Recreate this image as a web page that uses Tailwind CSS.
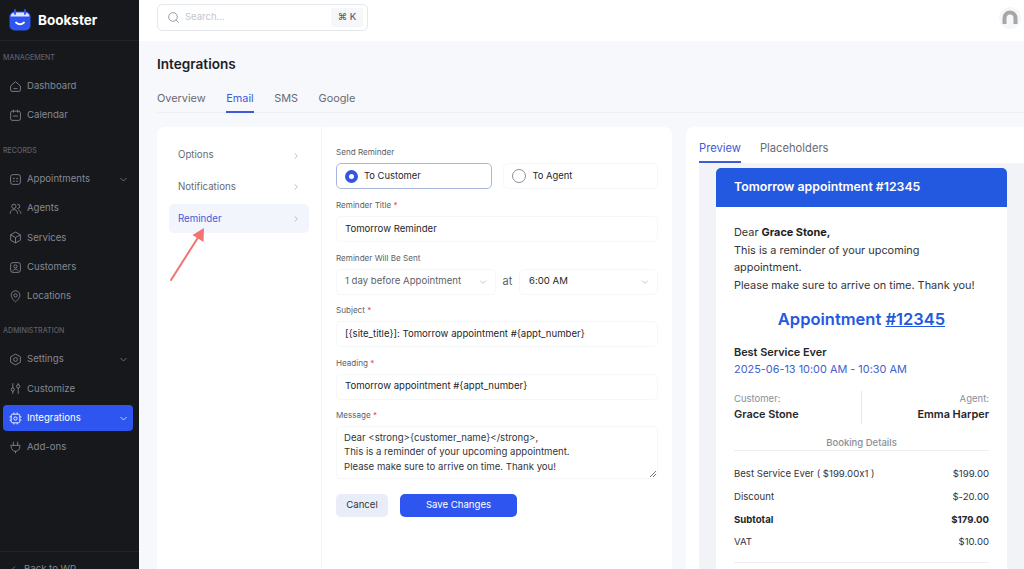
<!DOCTYPE html>
<html lang="en">
<head>
    <meta charset="UTF-8">
    <title>Bookster</title>
    <script src="https://cdn.jsdelivr.net/npm/@tailwindcss/browser@4"></script>
</head>
<body class="w-[1024px] h-[569px] overflow-hidden flex bg-[#f6f8fc] font-['Inter','Liberation_Sans',sans-serif] [font-feature-settings:'calt'_0] text-[#1c1e24]">

    <!-- Sidebar -->
    <aside class="w-[139px] h-[569px] shrink-0 bg-[#17181c] flex flex-col text-[#858892] text-[9.600px]">
        <div class="h-[41px] shrink-0 flex items-center gap-[7px] pl-[9px] border-b border-[#22242a]">
            <svg width="22" height="22" viewBox="0 0 22 22">
                <rect x="0.5" y="2.5" width="21" height="19" rx="5" fill="#2f55f0"/>
                <path d="M1.5 7.5Q2 4 6 3.5H16Q20 4 20.5 7.5Z" fill="#dfe6ff"/>
                <path d="M6 1v4M16 1v4" stroke="#2f55f0" stroke-width="1.8" stroke-linecap="round"/>
                <path d="M7 13.5q4 3.6 8 0" fill="none" stroke="#fff" stroke-width="1.8" stroke-linecap="round"/>
            </svg>
            <span class="text-white text-[13.5px] font-bold">Bookster</span>
        </div>

        <p class="mt-[13px] pl-[3px] text-[7.100px] leading-[8px] font-medium text-[#5c5f68]">MANAGEMENT</p>
        <nav class="mt-[11px] flex flex-col gap-[3.3px]">
            <a class="h-[26px] ml-[3px] mr-[6px] pl-[6px] flex items-center gap-[5px]">
                <svg class="w-[13px] h-[13px]" viewBox="0 0 24 24" fill="none" stroke="currentColor" stroke-width="1.6"><path d="M3 11l9-8 9 8v8a2 2 0 0 1-2 2H5a2 2 0 0 1-2-2z"/><path d="M9 16h6" stroke-linecap="round"/></svg>
                Dashboard
            </a>
            <a class="h-[26px] ml-[3px] mr-[6px] pl-[6px] flex items-center gap-[5px]">
                <svg class="w-[13px] h-[13px]" viewBox="0 0 24 24" fill="none" stroke="currentColor" stroke-width="1.6"><rect x="3" y="4" width="18" height="17" rx="3"/><path d="M8 2v4M16 2v4M8 13h8" stroke-linecap="round"/></svg>
                Calendar
            </a>
        </nav>

        <p class="mt-[19px] pl-[3px] text-[7.100px] leading-[8px] font-medium text-[#5c5f68]">RECORDS</p>
        <nav class="mt-[11px] flex flex-col gap-[3.3px]">
            <a class="h-[26px] ml-[3px] mr-[6px] pl-[6px] pr-[5px] flex items-center gap-[5px]">
                <svg class="w-[13px] h-[13px]" viewBox="0 0 24 24" fill="none" stroke="currentColor" stroke-width="1.6"><rect x="3" y="3" width="18" height="18" rx="4"/><path d="M8 10h2M14 10h2M8 15h2M14 15h2" stroke-linecap="round"/></svg>
                Appointments
                <svg class="ml-auto w-[9px] h-[9px]" viewBox="0 0 24 24" fill="none" stroke="currentColor" stroke-width="2"><path d="M4 8l8 8 8-8"/></svg>
            </a>
            <a class="h-[26px] ml-[3px] mr-[6px] pl-[6px] flex items-center gap-[5px]">
                <svg class="w-[13px] h-[13px]" viewBox="0 0 24 24" fill="none" stroke="currentColor" stroke-width="1.6"><circle cx="9" cy="8" r="4"/><path d="M2 21c0-4 3-7 7-7s7 3 7 7M16 4a4 4 0 0 1 0 8M18 15c2 1 4 3 4 6" stroke-linecap="round"/></svg>
                Agents
            </a>
            <a class="h-[26px] ml-[3px] mr-[6px] pl-[6px] flex items-center gap-[5px]">
                <svg class="w-[13px] h-[13px]" viewBox="0 0 24 24" fill="none" stroke="currentColor" stroke-width="1.6"><path d="M12 2l9 5v10l-9 5-9-5V7z"/><path d="M3 7l9 5 9-5M12 12v10"/></svg>
                Services
            </a>
            <a class="h-[26px] ml-[3px] mr-[6px] pl-[6px] flex items-center gap-[5px]">
                <svg class="w-[13px] h-[13px]" viewBox="0 0 24 24" fill="none" stroke="currentColor" stroke-width="1.6"><rect x="3" y="3" width="18" height="18" rx="4"/><circle cx="12" cy="10" r="3"/><path d="M7 19c1-3 3-4 5-4s4 1 5 4"/></svg>
                Customers
            </a>
            <a class="h-[26px] ml-[3px] mr-[6px] pl-[6px] flex items-center gap-[5px]">
                <svg class="w-[13px] h-[13px]" viewBox="0 0 24 24" fill="none" stroke="currentColor" stroke-width="1.6"><path d="M12 22s8-6.500 8-12.500A8 8 0 0 0 4 9.500C4 15.500 12 22 12 22z"/><circle cx="12" cy="10" r="3"/></svg>
                Locations
            </a>
        </nav>

        <p class="mt-[18px] pl-[3px] text-[7.100px] leading-[8px] font-medium text-[#5c5f68]">ADMINISTRATION</p>
        <nav class="mt-[11px] flex flex-col gap-[3.3px]">
            <a class="h-[26px] ml-[3px] mr-[6px] pl-[6px] pr-[5px] flex items-center gap-[5px]">
                <svg class="w-[13px] h-[13px]" viewBox="0 0 24 24" fill="none" stroke="currentColor" stroke-width="1.6"><path d="M12 2l9 5v10l-9 5-9-5V7z"/><circle cx="12" cy="12" r="3.500"/></svg>
                Settings
                <svg class="ml-auto w-[9px] h-[9px]" viewBox="0 0 24 24" fill="none" stroke="currentColor" stroke-width="2"><path d="M4 8l8 8 8-8"/></svg>
            </a>
            <a class="h-[26px] ml-[3px] mr-[6px] pl-[6px] flex items-center gap-[5px]">
                <svg class="w-[13px] h-[13px]" viewBox="0 0 24 24" fill="none" stroke="currentColor" stroke-width="1.6"><path d="M7 3v8M7 17v4M17 3v2M17 11v10" stroke-linecap="round"/><circle cx="7" cy="14" r="3"/><circle cx="17" cy="8" r="3"/></svg>
                Customize
            </a>
            <a class="h-[26px] ml-[3px] mr-[6px] pl-[6px] pr-[5px] flex items-center gap-[5px] rounded-[4px] bg-[#2f55f0] text-white">
                <svg class="w-[13px] h-[13px]" viewBox="0 0 24 24" fill="none" stroke="currentColor" stroke-width="1.6"><rect x="4" y="4" width="16" height="16" rx="3"/><circle cx="12" cy="12" r="3"/><path d="M9 1v3M15 1v3M9 20v3M15 20v3M1 9h3M1 15h3M20 9h3M20 15h3"/></svg>
                Integrations
                <svg class="ml-auto w-[9px] h-[9px]" viewBox="0 0 24 24" fill="none" stroke="currentColor" stroke-width="2"><path d="M4 8l8 8 8-8"/></svg>
            </a>
            <a class="h-[26px] ml-[3px] mr-[6px] pl-[6px] flex items-center gap-[5px]">
                <svg class="w-[13px] h-[13px]" viewBox="0 0 24 24" fill="none" stroke="currentColor" stroke-width="1.6"><path d="M8 2v6M16 2v6M4 8h16v3a8 8 0 0 1-16 0zM12 19v3" stroke-linecap="round"/></svg>
                Add-ons
            </a>
        </nav>

        <div class="mt-auto h-[18px] shrink-0 border-t border-[#22242a] pl-[9px] pt-[11px] flex items-start gap-[6px] leading-[12px]">
            <svg class="w-[9px] h-[9px] mt-[2px]" viewBox="0 0 24 24" fill="none" stroke="currentColor" stroke-width="2"><path d="M16 4l-8 8 8 8"/></svg>
            <span class="whitespace-nowrap">Back to WP</span>
        </div>
    </aside>

    <div class="flex-1 min-w-0 flex flex-col h-[569px]">
        <!-- Top bar -->
        <header class="h-[41px] shrink-0 bg-white flex items-center justify-between pl-[18px] pr-[3px]">
            <div class="w-[211px] h-[27px] mt-[-6px] rounded-[5px] border border-[#e4e7ec] flex items-center pl-[9px] pr-[4px] gap-[5px] text-[9.500px] text-[#c3c6cd]">
                <svg class="w-[13px] h-[13px] text-[#8b8e98]" viewBox="0 0 24 24" fill="none" stroke="currentColor" stroke-width="1.6"><circle cx="11" cy="11" r="8"/><path d="M17 17l4 4" stroke-linecap="round"/></svg>
                Search...
                <span class="ml-auto w-[32px] h-[19px] rounded-[3px] bg-[#f6f7f9] flex items-center justify-center text-[9.500px] font-medium text-[#5c5f68]">⌘ K</span>
            </div>
            <svg class="mt-[-6px]" width="22" height="22" viewBox="0 0 22 22" fill="none">
                <circle cx="11" cy="11" r="11" fill="#f6f7f8"/>
                <path d="M5.500 17v-6a5.500 5.500 0 0 1 11 0v6" stroke="#a4a6aa" stroke-width="4"/>
            </svg>
        </header>

        <main class="flex-1 min-h-0 pl-[18px] flex flex-col overflow-hidden">
            <h1 class="mt-[14px] text-[13.600px] leading-[18px] font-semibold text-[#1c1e24]">Integrations</h1>
            <div class="mt-[17px] h-[23px] shrink-0 flex gap-[20.500px] text-[10.900px] text-[#686b74] border-b border-[#eef0f5]">
                <span>Overview</span>
                <span class="text-[#3f5bd6] border-b-2 border-[#3f5bd6] h-[23px]">Email</span>
                <span>SMS</span>
                <span>Google</span>
            </div>

            <div class="mt-[14px] flex-1 min-h-0 flex gap-[14px]">
                <!-- Settings card -->
                <section class="w-[515px] shrink-0 bg-white rounded-t-[8px] flex">
                    <div class="relative w-[165px] shrink-0 border-r border-[#f3f4f7] pt-[14px] pl-[12px] pr-[12px] flex flex-col gap-[2.700px] text-[9.700px] text-[#686b74]">
                        <div class="h-[29px] px-[9px] flex items-center justify-between">
                            Options
                            <svg class="w-[8px] h-[8px] text-[#9a9da5]" viewBox="0 0 24 24" fill="none" stroke="currentColor" stroke-width="2"><path d="M8 4l8 8-8 8"/></svg>
                        </div>
                        <div class="h-[29px] px-[9px] flex items-center justify-between">
                            Notifications
                            <svg class="w-[8px] h-[8px] text-[#9a9da5]" viewBox="0 0 24 24" fill="none" stroke="currentColor" stroke-width="2"><path d="M8 4l8 8-8 8"/></svg>
                        </div>
                        <div class="h-[29px] px-[9px] flex items-center justify-between rounded-[5px] bg-[#f2f5fc] text-[#3f5bd6]">
                            Reminder
                            <svg class="w-[8px] h-[8px] text-[#9a9da5]" viewBox="0 0 24 24" fill="none" stroke="currentColor" stroke-width="2"><path d="M8 4l8 8-8 8"/></svg>
                        </div>
                        <!-- annotation arrow -->
                        <svg class="absolute left-[10px] top-[96px]" width="40" height="60" viewBox="0 0 40 60" fill="none">
                            <path d="M4 57L32 13" stroke="#ef7570" stroke-width="2" stroke-linecap="round"/>
                            <path d="M37 5L36.500 19L25.500 12Z" fill="#ef7570"/>
                        </svg>
                    </div>

                    <form class="w-[322px] ml-[14px] pt-[20px] flex flex-col text-[9.600px] text-[#24262c]">
                        <label class="h-[11px] leading-[11px] text-[8.100px] text-[#5c5f68]">Send Reminder</label>
                        <div class="mt-[5px] flex gap-[11px]">
                            <div class="w-[156px] h-[26px] rounded-[5px] border border-[#a9b6dc] flex items-center pl-[8px] gap-[6px] text-[9.400px]">
                                <span class="w-[13px] h-[13px] rounded-full border-[4px] border-[#3454e6] bg-white"></span>To Customer
                            </div>
                            <div class="w-[156px] h-[26px] rounded-[5px] border border-[#f6f7f9] flex items-center pl-[8px] gap-[7px] text-[9.400px]">
                                <span class="w-[14px] h-[14px] rounded-full border border-[#8b8e98] bg-white"></span>To Agent
                            </div>
                        </div>

                        <label class="mt-[11px] h-[11px] leading-[11px] text-[8.100px] text-[#5c5f68]">Reminder Title <span class="text-[#e5484d]">*</span></label>
                        <div class="mt-[5px] h-[26px] rounded-[5px] border border-[#f6f7f9] flex items-center pl-[8px]">Tomorrow Reminder</div>

                        <label class="mt-[10.500px] h-[11px] leading-[11px] text-[8.100px] text-[#5c5f68]">Reminder Will Be Sent</label>
                        <div class="mt-[5px] flex items-center">
                            <div class="w-[160px] h-[26px] rounded-[5px] border border-[#f6f7f9] flex items-center pl-[8px] pr-[8px] justify-between text-[#5c5f68]">
                                1 day before Appointment
                                <svg class="w-[8px] h-[8px] text-[#a4a6ad]" viewBox="0 0 24 24" fill="none" stroke="currentColor" stroke-width="2"><path d="M4 8l8 8 8-8"/></svg>
                            </div>
                            <span class="w-[23px] text-center text-[#5c5f68] text-[11px]">at</span>
                            <div class="w-[139px] h-[26px] rounded-[5px] border border-[#f6f7f9] flex items-center pl-[9px] pr-[8px] justify-between">
                                6:00 AM
                                <svg class="w-[8px] h-[8px] text-[#a4a6ad]" viewBox="0 0 24 24" fill="none" stroke="currentColor" stroke-width="2"><path d="M4 8l8 8 8-8"/></svg>
                            </div>
                        </div>

                        <label class="mt-[10.500px] h-[11px] leading-[11px] text-[8.100px] text-[#5c5f68]">Subject <span class="text-[#e5484d]">*</span></label>
                        <div class="mt-[5px] h-[26px] rounded-[5px] border border-[#f6f7f9] flex items-center pl-[8px]">[{site_title}]: Tomorrow appointment #{appt_number}</div>

                        <label class="mt-[10.500px] h-[11px] leading-[11px] text-[8.100px] text-[#5c5f68]">Heading <span class="text-[#e5484d]">*</span></label>
                        <div class="mt-[5px] h-[26px] rounded-[5px] border border-[#f6f7f9] flex items-center pl-[8px]">Tomorrow appointment #{appt_number}</div>

                        <label class="mt-[10.500px] h-[11px] leading-[11px] text-[8.100px] text-[#5c5f68]">Message <span class="text-[#e5484d]">*</span></label>
                        <div class="relative mt-[5px] h-[53px] rounded-[5px] border border-[#f6f7f9] pl-[7px] pt-[3.500px] leading-[14.600px] text-[#33353b]">
                            <p>Dear &lt;strong&gt;{customer_name}&lt;/strong&gt;,</p>
                            <p>This is a reminder of your upcoming appointment.</p>
                            <p>Please make sure to arrive on time. Thank you!</p>
                            <svg class="absolute right-0 bottom-0" width="8" height="8" viewBox="0 0 8 8" stroke="#777" fill="none"><path d="M1 7L7 1M4 7L7 4"/></svg>
                        </div>

                        <div class="mt-[15px] flex gap-[12px]">
                            <button type="button" class="w-[52px] h-[23px] rounded-[5px] bg-[#e9edf7] text-[#33353b]">Cancel</button>
                            <button type="button" class="w-[117px] h-[23px] rounded-[5px] bg-[#2f55f0] text-white">Save Changes</button>
                        </div>
                    </form>
                </section>

                <!-- Preview card -->
                <section class="flex-1 min-w-0 bg-white rounded-tl-[8px] pl-[13px] flex flex-col">
                    <div class="h-[36px] shrink-0 flex gap-[19px] text-[11.200px] text-[#686b74]">
                        <span class="h-[36px] pt-[14px] leading-[15px] text-[#3f5bd6] border-b-2 border-[#3f5bd6]">Preview</span>
                        <span class="pt-[14px] leading-[15px]">Placeholders</span>
                    </div>
                    <div class="flex-1 bg-[#f1f3f6] pl-[17px] pr-[17px] pt-[5px] overflow-hidden">
                        <div class="h-[39px] rounded-t-[5px] bg-[#2359e0] flex items-center pl-[18px] text-white text-[12.300px] font-semibold">Tomorrow appointment #12345</div>
                        <div class="bg-white h-[400px] px-[18px] pt-[17px] text-[10.900px] text-[#33353b]">
                            <p class="leading-[17.600px]">Dear <strong class="font-bold text-[#1c1e24]">Grace Stone,</strong><br>This is a reminder of your upcoming appointment.<br>Please make sure to arrive on time. Thank you!</p>
                            <p class="mt-[14px] text-center text-[#2359e0] text-[16.500px] leading-[22px] font-semibold">Appointment <span class="underline">#12345</span></p>
                            <p class="mt-[13px] leading-[18px] font-semibold text-[#24262c]">Best Service Ever</p>
                            <p class="leading-[17px] text-[#3f62cc]">2025-06-13 10:00 AM - 10:30 AM</p>
                            <div class="mt-[13px] flex">
                                <div class="flex-1 border-r border-[#e4e7ec] h-[33px]">
                                    <p class="text-[9.500px] leading-[15px] text-[#8b8e98]">Customer:</p>
                                    <p class="leading-[17px] font-semibold text-[#24262c]">Grace Stone</p>
                                </div>
                                <div class="flex-1 text-right">
                                    <p class="text-[9.500px] leading-[15px] text-[#8b8e98]">Agent:</p>
                                    <p class="leading-[17px] font-semibold text-[#24262c]">Emma Harper</p>
                                </div>
                            </div>
                            <p class="mt-[12px] h-[15px] border-b border-[#eceef1] text-center text-[9.500px] leading-[13px] font-medium text-[#8b8e98]">Booking Details</p>
                            <div class="mt-[12px] flex flex-col text-[9.600px] leading-[22.700px]">
                                <div class="flex justify-between"><span>Best Service Ever ( $199.00x1 )</span><span>$199.00</span></div>
                                <div class="flex justify-between"><span>Discount</span><span>$-20.00</span></div>
                                <div class="flex justify-between font-bold text-[#24262c]"><span>Subtotal</span><span>$179.00</span></div>
                                <div class="flex justify-between"><span>VAT</span><span>$10.00</span></div>
                            </div>
                            <div class="mt-[8px] border-t border-[#eceef1]"></div>
                        </div>
                    </div>
                </section>
            </div>
        </main>
    </div>
</body>
</html>
